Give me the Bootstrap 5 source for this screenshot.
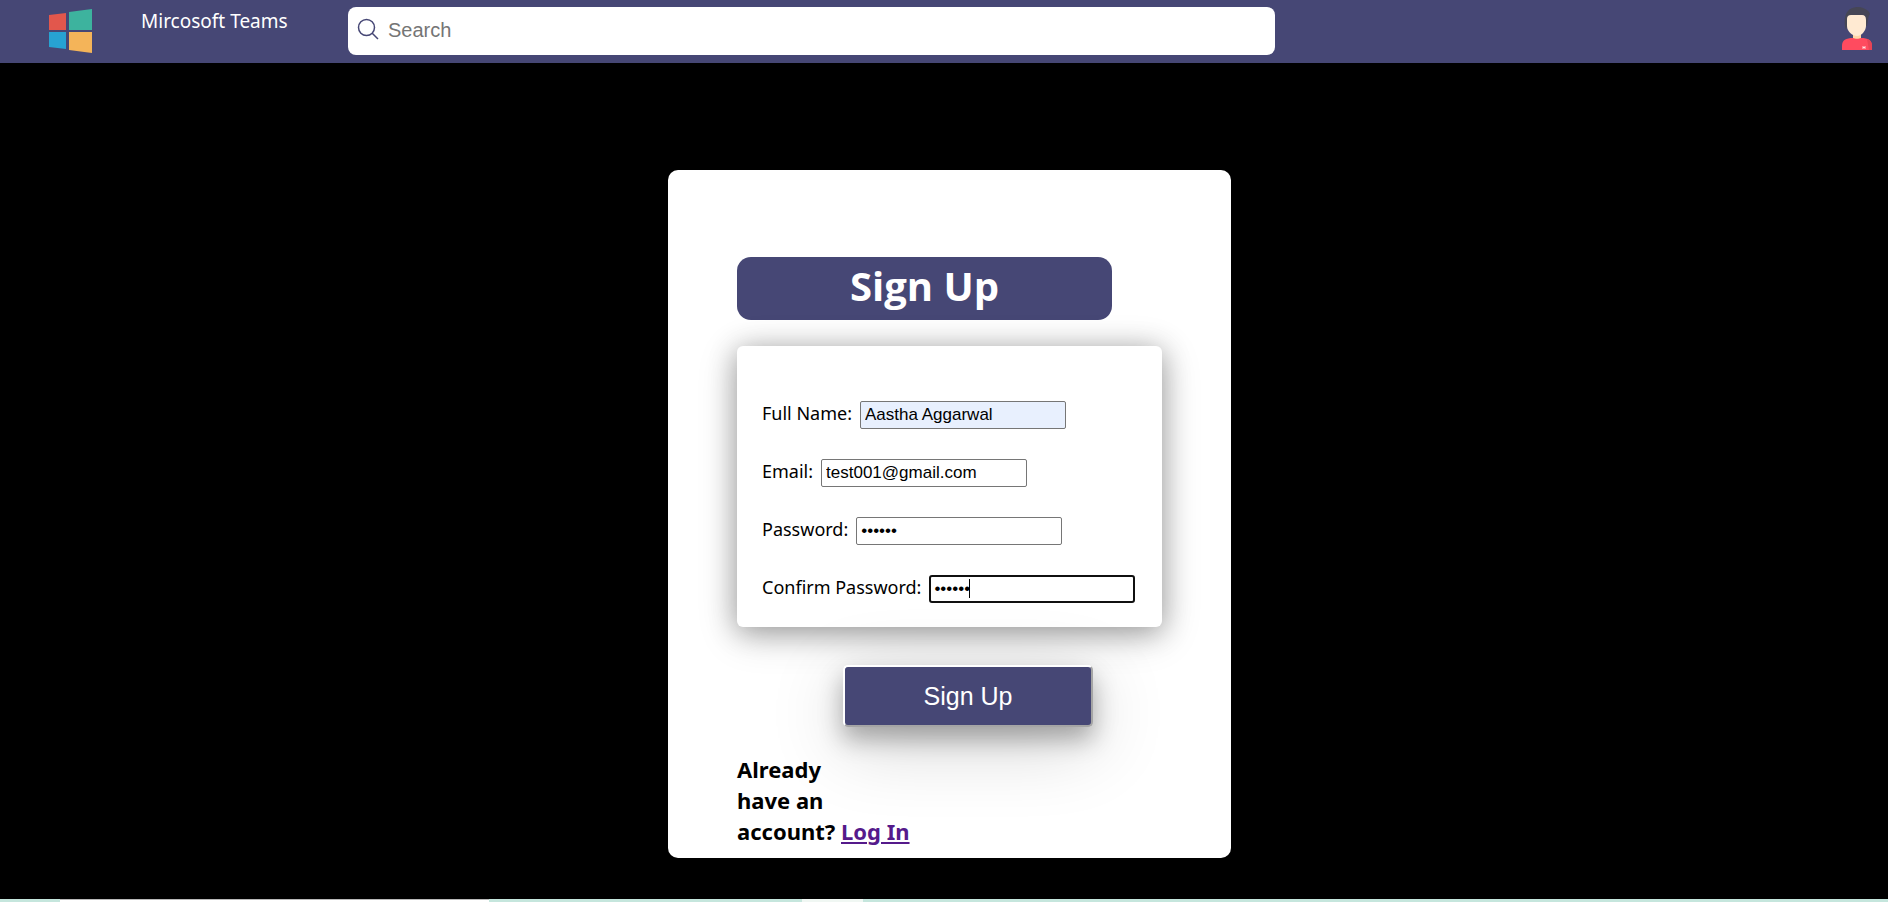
<!DOCTYPE html>
<html lang="en">
<head>
<meta charset="utf-8">
<meta name="viewport" content="width=device-width, initial-scale=1">
<title>Sign Up</title>
<link href="https://cdn.jsdelivr.net/npm/bootstrap@5.3.0/dist/css/bootstrap.min.css" rel="stylesheet">
<style>
  :root { --brand: #464775; }
  body { font-family: "Noto Sans", "Open Sans", sans-serif; font-size: 18px; color: #000; background: #000; }
  .topbar { height: 63px; padding: 7px 16px 7px 48px; background: var(--brand); }
  .brand-name { width: 207px; margin-left: 48px; font-size: 19px; line-height: 29px; color: #fff; }
  .search-box { flex: 0 1 927px; height: 48px; padding: 0 8px 2px; border-radius: 8px; background: #fff; }
  .search-box input { font: 20px "Liberation Sans", Arial, sans-serif; outline: 0; padding: 0 0 0 8px; }
  .search-box input::placeholder { color: #757575; }
  .stage { padding: 107px 0 41px 11px; }
  .signup-card { width: 563px; max-width: 100%; padding: 87px 69px 11px; border-radius: 10px; background: #fff; }
  .signup-title { width: 375px; max-width: 100%; height: 63px; margin-bottom: 26px; border-radius: 14px; font-family: "Open Sans", sans-serif; font-size: 40px; line-height: 58px; background: var(--brand); }
  .field-panel { padding: 55px 25px 23px; gap: 29px; border-radius: 6px; box-shadow: 0 4px 28px rgba(0,0,0,.3), 0 8px 40px rgba(0,0,0,.19); }
  .field-row { height: 29px; gap: 8px; }
  .field-row label { white-space: nowrap; line-height: 24px; }
  .field-row input { width: 206px; height: 28px; padding: 1px 4px; border: 1px solid #767676; border-radius: 2px; font: 17px "Liberation Sans", Arial, sans-serif; color: #000; background: #fff; outline: 0; }
  .field-row input.filled { background: #e8f0fe; }
  .field-row input.active { border: 2px solid #101010; border-radius: 3px; padding: 0 3px; caret-color: transparent; background: #fff linear-gradient(#000, #000) no-repeat 38px 2px / 1px 19px; }
  .signup-btn { width: 250px; height: 62px; margin: 38px 0 0 106px; border: 2px solid; border-color: #fff #a5a5a5 #a5a5a5 #fff; border-radius: 5px; font: 25px "Liberation Sans", Arial, sans-serif; color: #fff; background: var(--brand); box-shadow: 0 12px 24px rgba(0,0,0,.3), 0 17px 76px rgba(0,0,0,.19); }
  .login-hint { margin: 27px 0 0; font-size: 22px; line-height: 31px; }
  .login-hint a { color: #551a8b; text-underline-offset: 2px; }
  .edge { height: 3px; grid-template-columns: 60fr 429fr 313fr 61fr 1025fr; }
  .edge span { background: #c5e6dd; }
  .edge .pane { background: #fff; border-top: 1px solid #b9b9b9; }
  .edge .pale { background: #f0f7f3; }
</style>
</head>
<body class="d-flex flex-column min-vh-100">
<header class="topbar d-flex align-items-start">
  <svg class="flex-shrink-0" width="45" height="48" viewBox="0 0 45 48" aria-hidden="true">
    <path fill="#e2574c" d="M1 8L18 6V23H1z"/>
    <path fill="#3db39e" d="M21 5L44 2V23H21z"/>
    <path fill="#27a2d2" d="M1 25H18V42L1 40z"/>
    <path fill="#f4b459" d="M21 25H44V46L21 43z"/>
  </svg>
  <div class="brand-name flex-shrink-0">Mircosoft Teams</div>
  <form class="search-box d-flex align-items-center" role="search">
    <svg class="flex-shrink-0" width="24" height="24" viewBox="0 0 24 24" fill="none" stroke="#464775" stroke-width="1.5" aria-hidden="true">
      <circle cx="10.5" cy="9.500" r="8"/><path d="M16 15l6 6"/>
    </svg>
    <input class="flex-grow-1 border-0" type="search" placeholder="Search" aria-label="Search">
  </form>
  <svg class="flex-shrink-0 ms-auto" width="30" height="43" viewBox="0 0 30 43" aria-hidden="true">
    <path fill="#464655" d="M4 23C2 18 2 8 6 4c4-5 13-5 17-2 2 1 4 2 5 5-2 2-2 8-3 12H5z"/>
    <path fill="#ffd6a6" d="M11 25h8v8h-8z"/>
    <path fill="#ffead2" d="M5 12q0-4 4-4h11q4 0 4 5v6c0 5-5 10-9 10s-10-4-10-10z"/>
    <path fill="#ff4b5f" d="M0 43v-4c0-6 4-8 11-8 2 1 6 1 8 0 7 0 11 2 11 8v4z"/>
    <path fill="#e84455" d="M25 32c3 1 5 3 5 7v4h-3z"/>
    <path fill="#ff8c98" d="M20 39h4v3h-4z"/><path fill="#ffe1e4" d="M21 40h2v1h-2z"/>
  </svg>
</header>
<main class="stage flex-grow-1 d-flex justify-content-center align-items-start">
  <form class="signup-card">
    <h1 class="signup-title text-center text-white fw-bold">Sign Up</h1>
    <div class="field-panel d-flex flex-column">
      <div class="field-row d-flex"><label for="name">Full Name:</label><input id="name" class="filled" type="text" value="Aastha Aggarwal"></div>
      <div class="field-row d-flex"><label for="email">Email:</label><input id="email" type="email" value="test001@gmail.com"></div>
      <div class="field-row d-flex"><label for="pass">Password:</label><input id="pass" type="password" value="abc123"></div>
      <div class="field-row d-flex"><label for="confirm">Confirm Password:</label><input id="confirm" class="active" type="password" value="abc123"></div>
    </div>
    <button class="signup-btn d-block" type="button">Sign Up</button>
    <p class="login-hint fw-bold">Already<br>have an<br>account? <a href="#login">Log In</a></p>
  </form>
</main>
<footer class="edge d-grid" aria-hidden="true"><span></span><span class="pane"></span><span></span><span class="pale"></span><span></span></footer>
<script src="https://cdn.jsdelivr.net/npm/bootstrap@5.3.0/dist/js/bootstrap.bundle.min.js"></script>
</body>
</html>
